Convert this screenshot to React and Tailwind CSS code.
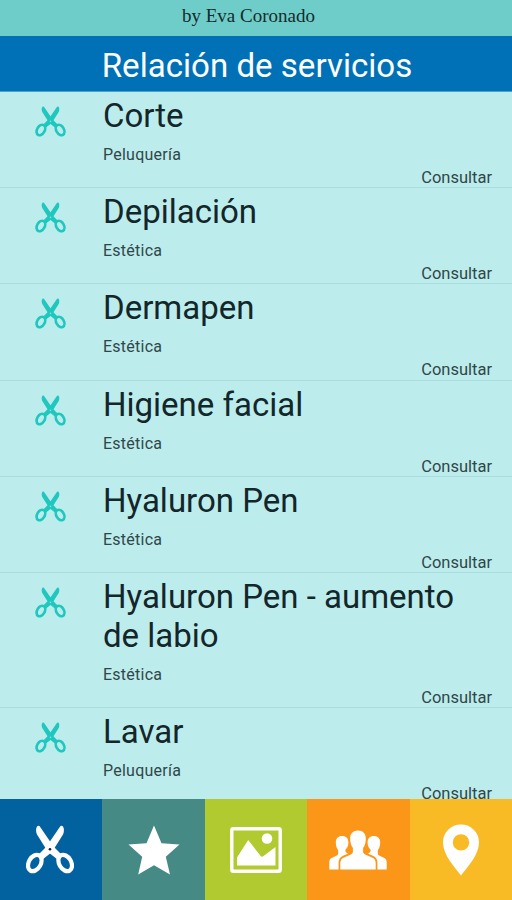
import React from "react";

const services = [
  { name: "Corte", category: "Peluquería" },
  { name: "Depilación", category: "Estética" },
  { name: "Dermapen", category: "Estética" },
  { name: "Higiene facial", category: "Estética" },
  { name: "Hyaluron Pen", category: "Estética" },
  { name: "Hyaluron Pen - aumento de labio", category: "Estética" },
  { name: "Lavar", category: "Peluquería" }
];

function ScissorsIcon({ className, dot }) {
  return (
    <svg viewBox="0 0 48 49" className={className} fill="currentColor">
      <path d="M11 1.400c1.200-1 2.500-.7 3.200.5L27.500 21.500 36 30l-4.500 4.500-9.500-7.500L11 9.500C9.800 6.800 9.700 3.200 11 1.400z" />
      <path d="M37 1.400c-1.200-1-2.500-.7-3.200.5L20.500 21.500 12 30l4.500 4.500 9.500-7.500L37 9.500c1.200-2.700 1.300-6.300 0-8.100z" />
      <g fill="none" stroke="currentColor" strokeWidth="4.200">
        <ellipse cx="8.800" cy="38" rx="6" ry="8.800" transform="rotate(30 8.800 38)" />
        <ellipse cx="39.200" cy="38" rx="6" ry="8.800" transform="rotate(-30 39.200 38)" />
      </g>
      <circle cx="24" cy="24.300" r="1.300" fill={dot} />
    </svg>
  );
}

function StarIcon() {
  return (
    <svg viewBox="0 0 52 50" className="h-[50px] w-[52px]" fill="currentColor">
      <path d="M26 .5l7.500 17.700 18 1.300-13.700 12.200 4.200 17.800-16-9.300-15.800 9.300 4-17.800L.5 19.500l18-1.300z" />
    </svg>
  );
}

function GalleryIcon() {
  return (
    <svg viewBox="0 0 52 46" className="h-[46px] w-[52px]" fill="currentColor">
      <rect x="1.800" y="1.800" width="48.400" height="42.400" rx="1.500" fill="none" stroke="currentColor" strokeWidth="3.400" />
      <path d="M7 30.500L18.200 13l12.500 16c.8.900 1.800.8 2.800 0L45.500 20v18.500H7z" />
      <circle cx="37" cy="11.500" r="5.300" />
    </svg>
  );
}

function PeopleIcon() {
  return (
    <svg viewBox="0 0 58 40" className="h-10 w-[58px]" fill="currentColor">
      <path d="M29 .5c-5 0-7.800 3.200-7.800 7.700 0 3.600.7 7.300 2.700 9.800v3.500c0 1.800-1 2.700-3 3.500l-5.400 2.200c-3.100 1.300-4.200 3-4.200 6V39.500h35.400v-6.300c0-3-1.100-4.700-4.200-6L37.100 25c-2-.8-3-1.700-3-3.500V18c2-2.500 2.700-6.200 2.700-9.800C36.800 3.700 34 .5 29 .5z" />
      <path d="M19.400 12.700c0-4.300-2.200-6.700-6.200-6.700-4.100 0-6.400 2.400-6.400 6.600 0 3.300 1 6 2.400 7.600v3c0 1.400-.8 2.200-2.400 2.900l-3.600 1.600C1 28.700.3 30 .3 32.500v7h9.300v-7c0-3.200 1.600-5.600 5-7l4.300-1.800-.8-.8c-1.100-.4-1.700-1.200-1.700-2.400v-.7c1.500-1.500 3-4 3-7.100z" />
      <path d="M38.600 12.700c0-4.300 2.200-6.700 6.200-6.700 4.100 0 6.400 2.400 6.400 6.600 0 3.300-1 6-2.400 7.600v3c0 1.400.8 2.200 2.400 2.900l3.600 1.600c2.200 1 2.900 2.300 2.900 4.800v7h-9.300v-7c0-3.200-1.600-5.600-5-7l-4.300-1.800.8-.8c1.100-.4 1.700-1.200 1.700-2.400v-.7c-1.500-1.500-3-4-3-7.100z" />
    </svg>
  );
}

function PinIcon() {
  return (
    <svg viewBox="0 0 36 52" className="h-[52px] w-9" fill="currentColor" fillRule="evenodd">
      <path d="M18 .5C8 .5 0 8.300 0 18.200 0 31.500 12 43 18 51.500 24 43 36 31.500 36 18.200 36 8.300 28 .5 18 .5zm0 9.700a8.200 8.200 0 1 1 0 16.400 8.200 8.200 0 0 1 0-16.400z" />
    </svg>
  );
}

function ServiceRow({ service }) {
  return (
    <li className="flex shrink-0 border-b border-[#a9dddd] pt-1">
      <div className="w-[103px] shrink-0 pt-2.5 pl-[35px]">
        <ScissorsIcon className="h-[31px] w-[31px] text-[#20c7be]" dot="#8be0dc" />
      </div>
      <div className="flex min-w-0 flex-1 flex-col">
        <div className="pr-10 text-[33px] leading-[39px] text-[#13262a]">{service.name}</div>
        <div className="mt-[11px] text-[16px] leading-[18px] tracking-[0.25px] text-[#30474a]">{service.category}</div>
        <div className="mt-[5px] h-[18.200px] pr-5 text-right text-[16.500px] leading-[18px] text-[#30474a]">Consultar</div>
      </div>
    </li>
  );
}

const tab = "flex items-center justify-center";

export default function App() {
  return (
    <div className="flex h-[900px] w-[512px] flex-col overflow-hidden bg-[#bcedec] font-['Roboto',sans-serif]">
      <header className="h-9 shrink-0 bg-[#6fcdc9] pr-[15px] text-center font-['Liberation_Serif',serif] text-[19px] leading-[31px] text-[#142c2c]">
        by Eva Coronado
      </header>
      <h1 className="h-[56px] shrink-0 border-b border-[#4f9fc9] bg-[#0071b7] pl-0.5 text-center text-[33.100px] leading-[59px] text-white">
        Relación de servicios
      </h1>
      <ul className="flex min-h-0 flex-1 flex-col overflow-hidden">
        {services.map((service) => (
          <ServiceRow key={service.name} service={service} />
        ))}
      </ul>
      <nav className="grid h-[101px] shrink-0 grid-cols-5 text-white">
        <div className={`${tab} bg-[#0262a0] pr-[3px]`}>
          <ScissorsIcon className="h-[49px] w-12" dot="#123" />
        </div>
        <div className={`${tab} bg-[#468a86] pl-px`}>
          <StarIcon />
        </div>
        <div className={`${tab} bg-[#b0ca30]`}>
          <GalleryIcon />
        </div>
        <div className={`${tab} bg-[#fb9619]`}>
          <PeopleIcon />
        </div>
        <div className={`${tab} bg-[#f9bb25]`}>
          <PinIcon />
        </div>
      </nav>
    </div>
  );
}
